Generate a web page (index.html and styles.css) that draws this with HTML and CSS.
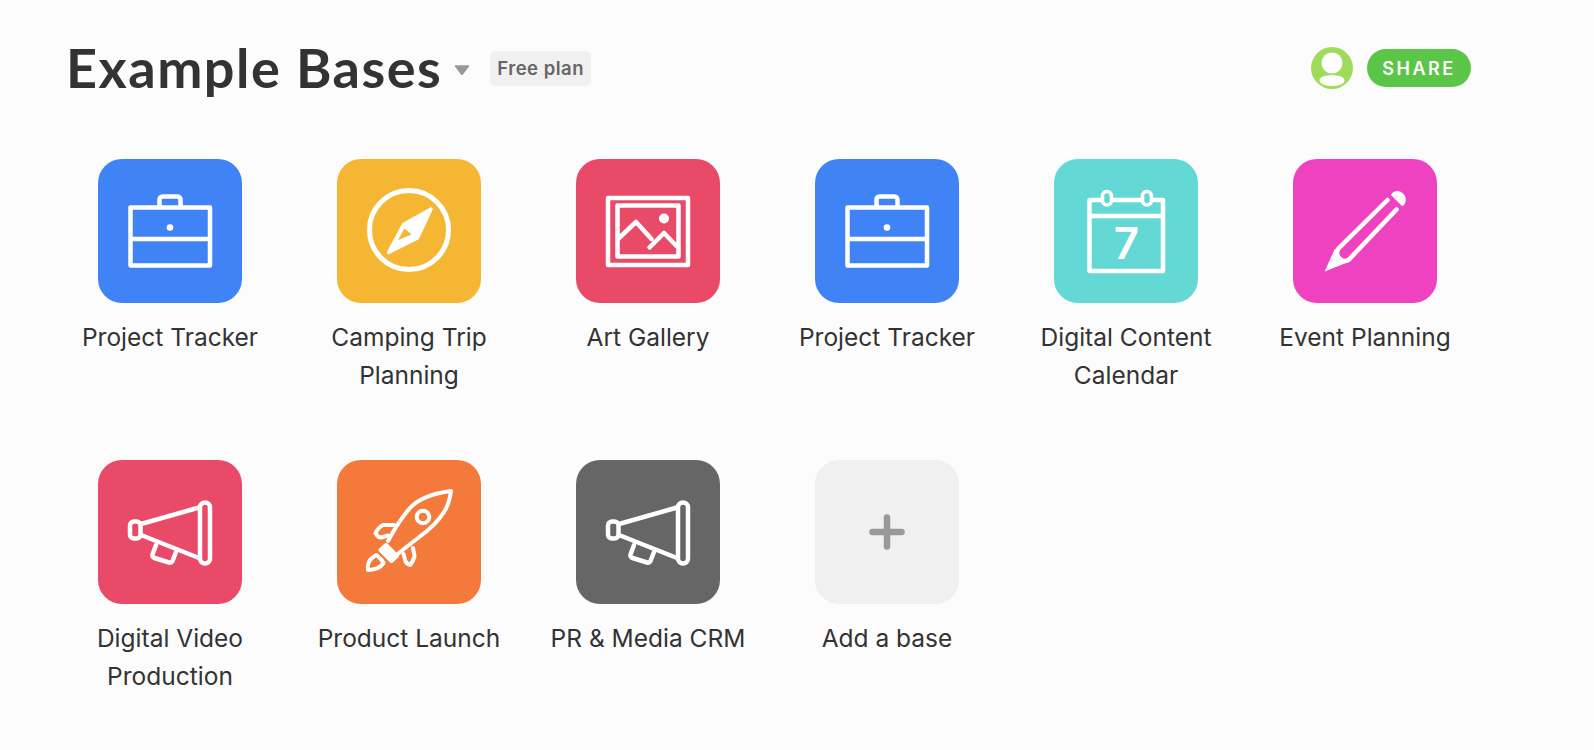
FILE: index.html
```html
<!DOCTYPE html>
<html lang="en">
<head>
  <meta charset="UTF-8">
  <meta name="viewport" content="width=device-width, initial-scale=1.0">
  <title>Example Bases</title>
  <link rel="stylesheet" href="styles.css">
</head>
<body>
  <header class="topbar">
    <h1 class="title">Example Bases</h1>
    <svg class="caret" viewBox="0 0 16 10"><path d="M1.5 1h13L8 9.500z" fill="#999" stroke="#999" stroke-width="1.500" stroke-linejoin="round"/></svg>
    <span class="plan">Free plan</span>
    <div class="avatar">
      <svg viewBox="0 0 42 42" width="42" height="42">
        <circle cx="21" cy="21" r="21" fill="#a0dc5c"/>
        <circle cx="21" cy="16" r="10.500" fill="#fff"/>
        <ellipse cx="21" cy="33.500" rx="12.500" ry="5.500" fill="#fff"/>
      </svg>
    </div>
    <button class="share">SHARE</button>
  </header>

  <main class="bases">
    <div class="base">
      <div class="tile blue">
        <svg class="icon" viewBox="0 0 144 144"><use href="#briefcase"/></svg>
      </div>
      <div class="name">Project Tracker</div>
    </div>
    <div class="base">
      <div class="tile yellow">
        <svg class="icon" viewBox="0 0 144 144">
          <circle cx="72" cy="71" r="39.500" fill="none" stroke="#fff" stroke-width="5"/>
          <path d="M94 50 66.500 65.500 51.500 93.500 80.500 79z" fill="#fff" stroke="#fff" stroke-width="3.500" stroke-linejoin="round"/>
          <path d="M61 81 67.500 69.500 74.500 75.500z" fill="#f5b733"/>
        </svg>
      </div>
      <div class="name">Camping Trip Planning</div>
    </div>
    <div class="base">
      <div class="tile red">
        <svg class="icon" viewBox="0 0 144 144">
          <g fill="none" stroke="#fff" stroke-width="4.500" stroke-linecap="round" stroke-linejoin="round">
            <rect x="32" y="39" width="80" height="67"/>
            <rect x="41.500" y="46.500" width="61" height="51"/>
            <path d="M42 80 60 63 75.500 80"/>
            <path d="M73.500 88.500 88 74 101 87.500"/>
          </g>
          <circle cx="88" cy="59.500" r="5" fill="#fff"/>
        </svg>
      </div>
      <div class="name">Art Gallery</div>
    </div>
    <div class="base">
      <div class="tile blue">
        <svg class="icon" viewBox="0 0 144 144"><use href="#briefcase"/></svg>
      </div>
      <div class="name">Project Tracker</div>
    </div>
    <div class="base">
      <div class="tile teal">
        <svg class="icon" viewBox="0 0 144 144">
          <g fill="none" stroke="#fff" stroke-width="4.500" stroke-linejoin="round">
            <rect x="35.500" y="41" width="73.500" height="71"/>
            <path d="M35.500 57h73.500"/>
          </g>
          <rect x="48.500" y="32.500" width="9" height="13.500" rx="4.500" fill="#64d8d4" stroke="#fff" stroke-width="3.500"/>
          <rect x="88.500" y="32.500" width="9" height="13.500" rx="4.500" fill="#64d8d4" stroke="#fff" stroke-width="3.500"/>
          <text class="day" x="72.500" y="100" text-anchor="middle">7</text>
        </svg>
      </div>
      <div class="name">Digital Content Calendar</div>
    </div>
    <div class="base">
      <div class="tile pink">
        <svg class="icon" viewBox="0 0 144 144">
          <path d="M94.500 41 45.500 89.500C43 92.500 44 97 46.500 99.500S53 103 56 100.500L103.500 50.500" fill="none" stroke="#fff" stroke-width="4.500" stroke-linecap="round"/>
          <path d="M31.700 112.500 41.500 90.500 45 89C44 95 49 101 55 101.500L53 104z" fill="#fff"/>
          <path d="M98 36C99.500 32.500 103 31.500 106 32.300 110.500 33.500 113.500 38 112.700 42 112.300 45 110.500 46.500 109 47z" fill="#fff"/>
        </svg>
      </div>
      <div class="name">Event Planning</div>
    </div>
    <div class="base">
      <div class="tile red">
        <svg class="icon" viewBox="0 0 144 144"><use href="#megaphone"/></svg>
      </div>
      <div class="name">Digital Video Production</div>
    </div>
    <div class="base">
      <div class="tile orange">
        <svg class="icon" viewBox="0 0 144 144">
          <g fill="none" stroke="#fff" stroke-width="4" stroke-linecap="round" stroke-linejoin="round">
            <path d="M51 81C57 70 64 58 73 48 83 37 99 33 114 31 113 38 111 46 107 52 101 62 92 70 81 78 73 84 66 90 58 96"/>
            <path d="M43.500 90 49 85 60 96 54.500 101z" fill="#fff"/>
            <circle cx="86" cy="57" r="6.300"/>
            <path d="M57 65 46 65C42 67 40 70 38.500 73 40 76 42 77.500 44 77.500L51 75.500"/>
            <path d="M76 88 77.500 96C76.500 100 75 103 73 105 70.500 104 69 103 68.500 101.500L66.500 94"/>
            <path d="M31 110C30 103 33 98 39.500 95 42 97 45 100 46.700 103 43 108 37 110 31 110z"/>
          </g>
        </svg>
      </div>
      <div class="name">Product Launch</div>
    </div>
    <div class="base">
      <div class="tile gray">
        <svg class="icon" viewBox="0 0 144 144"><use href="#megaphone"/></svg>
      </div>
      <div class="name">PR &amp; Media CRM</div>
    </div>
    <div class="base">
      <div class="tile light">
        <svg class="icon" viewBox="0 0 144 144">
          <path d="M72 57.500v29M57.500 72h29" fill="none" stroke="#999" stroke-width="6.500" stroke-linecap="round"/>
        </svg>
      </div>
      <div class="name">Add a base</div>
    </div>
  </main>

  <!-- shared icons -->
  <svg class="defs" width="0" height="0">
    <defs>
      <g id="briefcase">
        <g fill="none" stroke="#fff" stroke-width="4.500" stroke-linejoin="round">
          <rect x="32.500" y="48.500" width="79.500" height="58"/>
          <path d="M32.500 80h79.500"/>
          <path d="M61.500 47v-6.500a3 3 0 0 1 3-3h15a3 3 0 0 1 3 3V47"/>
        </g>
        <circle cx="72" cy="68.500" r="3.300" fill="#fff"/>
      </g>
      <g id="megaphone">
        <g fill="none" stroke="#fff" stroke-width="4.500" stroke-linejoin="round" stroke-linecap="round">
          <rect x="102" y="42.500" width="10" height="61" rx="5"/>
          <rect x="32" y="61.500" width="10.500" height="17" rx="4"/>
          <path d="M43 64 101 47.500M43 75 101 98"/>
          <path d="M58 85 54.500 94.500C54 96 55 97.500 56.500 98L71 102.500C72.500 103 74 102.300 74.500 101L78 92"/>
        </g>
      </g>
    </defs>
  </svg>
</body>
</html>
```
FILE: styles.css
```css
* {
  box-sizing: border-box;
}
body {
  margin: 0;
  background-color: #fcfcfc;
  color: #333;
  font-family: Inter, "Liberation Sans", sans-serif;
  overflow-x: hidden;
}
.topbar {
  display: flex;
  align-items: center;
  height: 60px;
  margin-top: 38px;
  padding: 0 123px 0 66px;
}
.title {
  margin: 0 0 2px;
  font-family: Lato, sans-serif;
  font-size: 54px;
  font-weight: 700;
  letter-spacing: 1.500px;
  color: #333;
}
.caret {
  width: 16px;
  height: 10px;
  margin: 4px 0 0 12px;
}
.plan {
  margin-left: 20px;
  padding: 7px;
  height: 35px;
  line-height: 21px;
  font-size: 18.500px;
  font-weight: 600;
  letter-spacing: 0.500px;
  color: #666;
  background-color: #f0f0f0;
  border-radius: 5px;
}
.avatar {
  width: 42px;
  height: 42px;
  margin-left: auto;
}
.share {
  width: 104px;
  height: 38px;
  margin-left: 14px;
  padding: 0;
  border: none;
  border-radius: 19px;
  background-color: #5bc548;
  color: #fff;
  font-family: Inter, sans-serif;
  font-size: 18px;
  font-weight: 600;
  letter-spacing: 2.500px;
}
.bases {
  display: grid;
  grid-template-columns: repeat(6, 239px);
  row-gap: 68px;
  padding: 61px 0 0 50.500px;
}
.base {
  display: flex;
  flex-direction: column;
  align-items: center;
  height: 233px;
}
.tile {
  width: 144px;
  height: 144px;
  flex: none;
  border-radius: 24px;
}
.icon {
  display: block;
  width: 144px;
  height: 144px;
}
.name {
  max-width: 210px;
  margin-top: 15px;
  font-size: 24.500px;
  line-height: 38px;
  text-align: center;
}
.day {
  font-family: Inter, sans-serif;
  font-size: 44px;
  font-weight: 600;
  fill: #fff;
}
.defs {
  position: absolute;
}
.blue { background-color: #4083f6; }
.yellow { background-color: #f5b733; }
.red { background-color: #e94a67; }
.teal { background-color: #64d8d4; }
.pink { background-color: #ef42c0; }
.orange { background-color: #f37a3a; }
.gray { background-color: #666; }
.light { background-color: #f0f0f0; }
```
